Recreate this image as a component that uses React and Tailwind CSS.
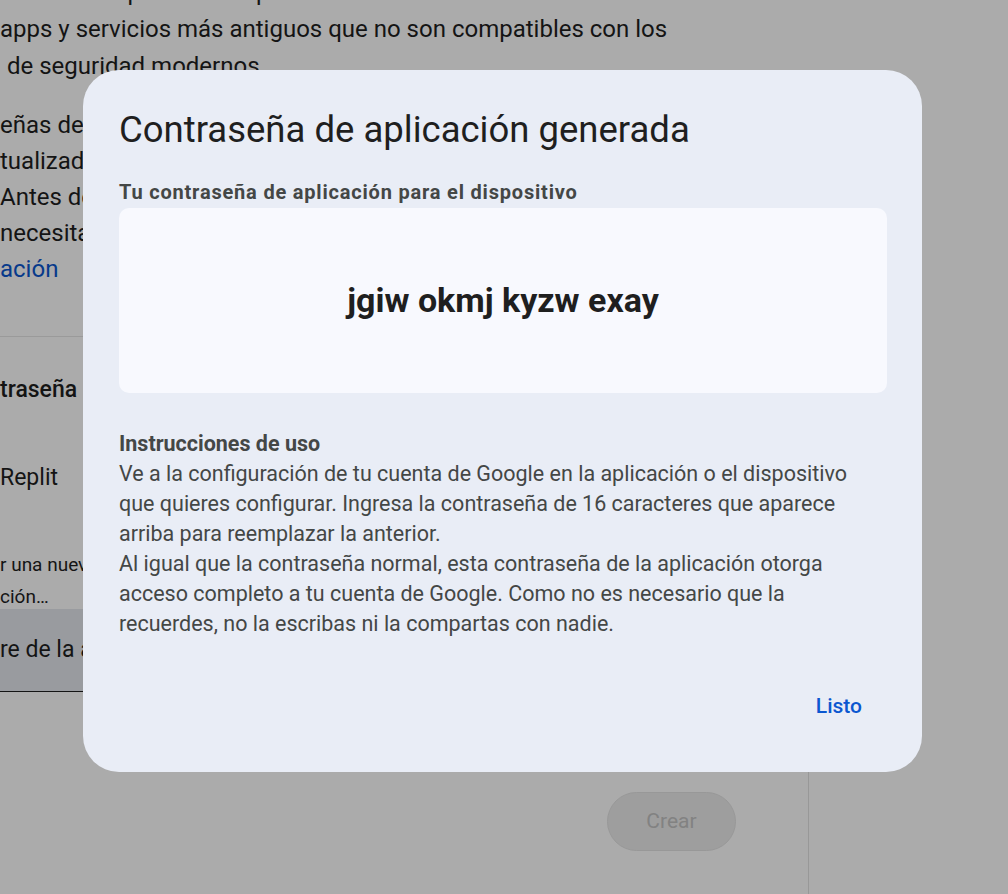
export default function App() {
    return (
        <div className="relative h-[894px] w-full overflow-hidden bg-white font-['Roboto',sans-serif] text-[#1f1f1f]">
            {/* page behind the dialog */}
            <div className="flex h-full">
                <div className="w-[808px] shrink-0 flex flex-col">
                    <div className="-mt-[26px] text-[24px] leading-[37px] whitespace-nowrap">
                        <div>eñas de la aplicación te permiten acceder a tu cuenta de</div>
                        <div>apps y servicios más antiguos que no son compatibles con los</div>
                        <div className="pl-[7px]">de seguridad modernos</div>
                    </div>
                    <div className="mt-[22px] text-[24px] leading-[36px] whitespace-nowrap">
                        <div>eñas de aplicación no se recomiendan y, en la mayoría de</div>
                        <div>tualizadas que admiten llaves de acceso y métodos</div>
                        <div>Antes de crear una contraseña de aplicación, verifica si</div>
                        <div>necesitas una para acceder a la app o el servicio.</div>
                        <div className="text-[#0b57d0]">ación</div>
                    </div>
                    <div className="mt-[49px] border-t border-[#e6e6e6]" />
                    <div className="mt-[35px] text-[23px] leading-[36px] font-medium whitespace-nowrap">traseña de aplicación</div>
                    <div className="mt-[52px] text-[23px] leading-[36px] whitespace-nowrap">Replit</div>
                    <div className="mt-[53px] text-[19px] leading-[32px] whitespace-nowrap">
                        <div>r una nueva contraseña específica de la app, escribe un nombre</div>
                        <div>ción…</div>
                    </div>
                    <div className="mt-[-4px] h-[83px] w-[780px] flex items-center bg-[#e4e8ee] border-b border-[#1f1f1f] text-[23px] whitespace-nowrap">
                        re de la app
                    </div>
                    <div className="mt-[100px] pl-[607px]">
                        <button className="h-[59px] w-[129px] rounded-full border border-[#e3e3e3] bg-[#ececec] text-[21px] text-[#c2c2c2]">Crear</button>
                    </div>
                </div>
                <div className="flex-1 flex flex-col">
                    <div className="h-[300px]" />
                    <div className="flex-1 border-l border-[#e3e3e3]" />
                </div>
            </div>

            {/* scrim */}
            <div className="absolute inset-0 bg-black/[0.33]" />

            {/* dialog */}
            <div className="absolute inset-0 flex justify-center items-start pt-[70px] pr-[3px]">
                <div className="w-[839px] h-[702px] rounded-[36px] bg-[#e9edf6] px-[36px] pt-[40px] flex flex-col">
                    <h1 className="text-[36.5px] leading-[40px] text-[#1f1f1f]">Contraseña de aplicación generada</h1>
                    <div className="mt-[30px] text-[20px] leading-[24px] font-bold tracking-[0.8px] text-[#444746]">Tu contraseña de aplicación para el dispositivo</div>
                    <div className="mt-[4px] mr-[-1px] h-[185px] rounded-[10px] bg-[#f8f9fe] flex items-center justify-center">
                        <span className="text-[34px] font-bold text-[#1f1f1f]">jgiw okmj kyzw exay</span>
                    </div>
                    <div className="mt-[36px] text-[21.5px] leading-[30px] text-[#444746] whitespace-nowrap">
                        <div className="font-bold">Instrucciones de uso</div>
                        <div>
                            Ve a la configuración de tu cuenta de Google en la aplicación o el dispositivo<br />
                            que quieres configurar. Ingresa la contraseña de 16 caracteres que aparece<br />
                            arriba para reemplazar la anterior.
                        </div>
                        <div>
                            Al igual que la contraseña normal, esta contraseña de la aplicación otorga<br />
                            acceso completo a tu cuenta de Google. Como no es necesario que la<br />
                            recuerdes, no la escribas ni la compartas con nadie.
                        </div>
                    </div>
                    <div className="mt-[48px] flex justify-end pr-[12px]">
                        <button className="h-[40px] px-[12px] text-[21px] font-medium text-[#0b57d0]">Listo</button>
                    </div>
                </div>
            </div>
        </div>
    )
}
